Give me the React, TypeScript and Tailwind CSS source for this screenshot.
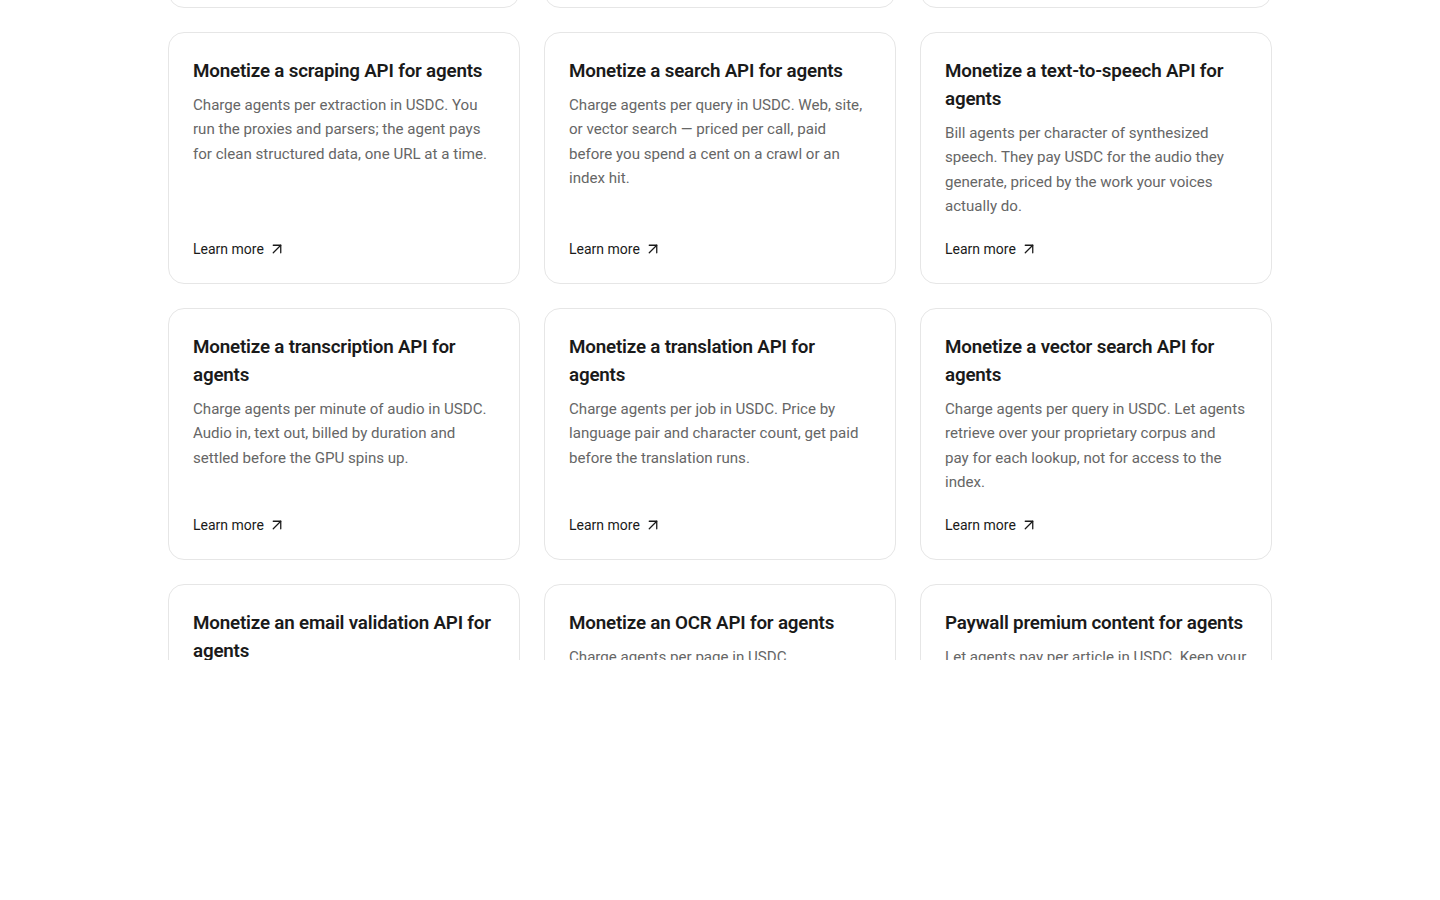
import React from 'react';
import { ArrowUpRight } from 'lucide-react';

type UseCase = { title: string; desc: string };

const useCases: UseCase[] = [
  {
    title: 'Monetize an image generation API for agents',
    desc: 'Charge agents per image in USDC. Prompt in, pixels out, priced by resolution and steps so every render is paid for before the GPU starts.',
  },
  {
    title: 'Monetize a PDF parsing API for agents',
    desc: 'Charge agents per document in USDC. Layout, tables and text come back clean, and each parse is settled before the work begins.',
  },
  {
    title: 'Monetize a geocoding API for agents',
    desc: 'Charge agents per lookup in USDC. Addresses in, coordinates out, priced per call and paid before your servers do the resolving.',
  },
  {
    title: 'Monetize a scraping API for agents',
    desc: 'Charge agents per extraction in USDC. You run the proxies and parsers; the agent pays for clean structured data, one URL at a time.',
  },
  {
    title: 'Monetize a search API for agents',
    desc: 'Charge agents per query in USDC. Web, site, or vector search — priced per call, paid before you spend a cent on a crawl or an index hit.',
  },
  {
    title: 'Monetize a text-to-speech API for agents',
    desc: 'Bill agents per character of synthesized speech. They pay USDC for the audio they generate, priced by the work your voices actually do.',
  },
  {
    title: 'Monetize a transcription API for agents',
    desc: 'Charge agents per minute of audio in USDC. Audio in, text out, billed by duration and settled before the GPU spins up.',
  },
  {
    title: 'Monetize a translation API for agents',
    desc: 'Charge agents per job in USDC. Price by language pair and character count, get paid before the translation runs.',
  },
  {
    title: 'Monetize a vector search API for agents',
    desc: 'Charge agents per query in USDC. Let agents retrieve over your proprietary corpus and pay\u00a0for each lookup, not for access to the index.',
  },
  {
    title: 'Monetize an email validation API for agents',
    desc: 'Charge agents per address checked in USDC. Syntax, domain and mailbox checks, each one paid for before it runs.',
  },
  {
    title: 'Monetize an OCR API for agents',
    desc: 'Charge agents per page in USDC. Documents in, structured text out, settled before the model reads a single line.',
  },
  {
    title: 'Paywall premium content for agents',
    desc: 'Let agents pay per article in USDC. Keep your best work behind a paywall that machines can actually clear.',
  },
];

function UseCaseCard({ item }: { item: UseCase }) {
  return (
    <a
      href="#"
      className="flex min-h-[252px] flex-col rounded-2xl border border-[#e6e6e6] bg-white p-6 transition-colors hover:border-[#cfcfcf]"
    >
      <h3 className="text-[18.8px] font-semibold leading-7 tracking-[-0.01em] text-[#1a1a1a]">{item.title}</h3>
      <p className="mt-2 text-[15.1px] leading-[24.4px] text-[#666666]">{item.desc}</p>
      <span className="mt-auto flex items-center gap-1 pt-5 text-sm leading-5 text-[#1a1a1a]">
        Learn more
        <ArrowUpRight size={18} strokeWidth={1.7} />
      </span>
    </a>
  );
}

export default function App() {
  return (
    <div className="min-h-[900px] bg-white" style={{ fontFamily: 'Roboto, "Liberation Sans", sans-serif' }}>
      <div className="h-[660px] overflow-hidden">
        <section className="mx-auto -mt-[244px] grid w-[1104px] grid-cols-3 gap-6">
          {useCases.map((item) => (
            <UseCaseCard key={item.title} item={item} />
          ))}
        </section>
      </div>
    </div>
  );
}
